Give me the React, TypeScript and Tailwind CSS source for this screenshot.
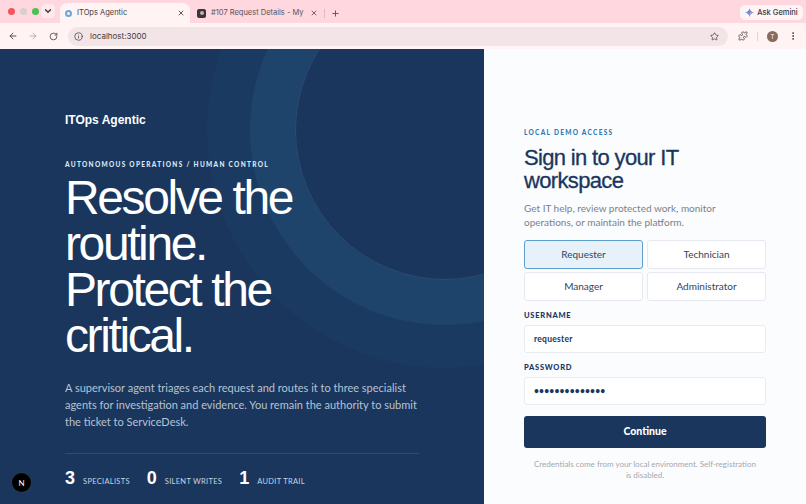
import React from "react";
import { ArrowLeft, ArrowRight, RotateCw, Info, Star, Puzzle, MoreVertical, ChevronDown, X, Plus } from "lucide-react";

const body = "font-['Lato','Noto_Sans',sans-serif]";

function Chrome() {
  return (
    <div className="h-[49px] shrink-0 bg-[#ffd7de] flex flex-col font-['Inter',sans-serif]">
      <div className="h-[23px] flex items-end relative">
        <div className="flex items-center gap-[5px] pl-[8px] w-[60px] h-full">
          <span className="w-[7px] h-[7px] rounded-full bg-[#f0565c]" />
          <span className="w-[7px] h-[7px] rounded-full bg-[#d9cfd2]" />
          <span className="w-[7px] h-[7px] rounded-full bg-[#4bbf55]" />
        </div>
        <div className="absolute left-[41px] top-[4px] w-[14px] h-[14px] rounded-[4px] bg-[#ffe9ec] flex items-center justify-center">
          <ChevronDown size={10} strokeWidth={3} className="text-[#3a3035]" />
        </div>
        <div className="h-[20px] w-[130px] ml-0 bg-[#fff3f4] rounded-t-[7px] flex items-center pl-[5px] pr-[5px] gap-[5px] text-[7.5px] text-[#3f3a3c]">
          <span className="w-[7px] h-[7px] rounded-full border-[2px] border-[#6aa7d8]" />
          <span className="flex-1">ITOps Agentic</span>
          <X size={8} strokeWidth={2.5} />
        </div>
        <div className="h-[20px] w-[134px] flex items-center pl-[7px] pr-[6px] gap-[5px] text-[7.5px] text-[#5b5356]">
          <span className="w-[9px] h-[9px] rounded-[2px] bg-[#39363a] flex items-center justify-center"><span className="w-[4px] h-[4px] rounded-full bg-[#b9b5b8]" /></span>
          <span className="flex-1 whitespace-nowrap overflow-hidden">#107 Request Details - My IT</span>
          <X size={8} strokeWidth={2.5} />
        </div>
        <div className="h-[20px] flex items-center gap-[6px] text-[#5b5356]">
          <span className="w-px h-[9px] bg-[#e9b6c0]" />
          <Plus size={9} strokeWidth={2.5} />
        </div>
        <div className="ml-auto mr-[3px] mb-[3px] h-[15px] w-[63px] bg-[#fff3f4] rounded-[5px] flex items-center justify-center gap-[3px] text-[7.5px] font-medium text-[#3b3639]">
          <svg width="9" height="9" viewBox="0 0 12 12">
            <path d="M6 0C6.5 3.5 8.5 5.5 12 6C8.5 6.5 6.5 8.5 6 12C5.5 8.5 3.5 6.5 0 6C3.5 5.5 5.5 3.5 6 0Z" fill="#5a8fe6" />
            <path d="M6 6L12 6C8.5 6.5 6.5 8.5 6 12Z" fill="#e98bb0" />
          </svg>
          Ask Gemini
        </div>
      </div>
      <div className="h-[26px] bg-[#fff3f4] flex items-center pl-[8px] pr-[8px] text-[#4a4346]">
        <ArrowLeft size={10} strokeWidth={2.2} />
        <ArrowRight size={10} strokeWidth={2.2} className="ml-[10px] text-[#b5acaf]" />
        <RotateCw size={9} strokeWidth={2.2} className="ml-[11px]" />
        <div className="ml-[10px] flex-1 h-[19px] rounded-full bg-[#f3e4e8] flex items-center pl-[6px] pr-[9px] text-[8px] mr-[10px]">
          <Info size={9} strokeWidth={2} />
          <span className="ml-[7px] text-[#403a3d]">localhost:3000</span>
          <Star size={9} strokeWidth={2} className="ml-auto" />
        </div>
        <Puzzle size={10} strokeWidth={2} />
        <span className="w-px h-[9px] bg-[#e3d3d7] ml-[9px]" />
        <span className="ml-[9px] w-[11px] h-[11px] rounded-full bg-[#8a6a5c] text-white text-[6px] flex items-center justify-center">T</span>
        <MoreVertical size={10} strokeWidth={2.4} className="ml-[10px]" />
      </div>
      <div className="h-0" />
    </div>
  );
}

function Stat({ n, label }: { n: string; label: string }) {
  return (
    <div className="flex items-baseline gap-[8px]">
      <span className="text-[18px] font-bold text-white font-['Liberation_Sans',sans-serif] leading-none">{n}</span>
      <span className="text-[7.5px] tracking-[0.04em] text-[#c8d4e2] uppercase">{label}</span>
    </div>
  );
}

function Role({ label, active }: { label: string; active?: boolean }) {
  return (
    <button
      className={
        active
          ? "h-[29px] rounded-[3px] border border-[#5f9fcd] bg-[#e7f1f9] text-[10px] text-[#31445f]"
          : "h-[29px] rounded-[3px] border border-[#e6e9ef] bg-white text-[10px] text-[#31445f]"
      }
    >
      {label}
    </button>
  );
}

export default function App() {
  return (
    <div className={`w-[806px] h-[504px] overflow-hidden flex flex-col ${body}`}>
      <Chrome />
      <div className="flex-1 flex min-h-0">
        <div className="w-[484px] shrink-0 bg-[#1a365d] relative overflow-hidden pl-[65px] pt-[64px]">
          <div className="absolute left-[295px] top-[-69px] w-[300px] h-[300px] rounded-full border border-[#2a4c76] shadow-[0_0_0_45px_rgba(40,90,130,0.32),0_0_0_88px_rgba(40,90,130,0.12)]" />
          <div className="relative">
            <div className="text-[12px] font-bold text-white font-['Liberation_Sans',sans-serif] leading-[15px]">ITOps Agentic</div>
            <div className="mt-[32px] text-[6.5px] font-black tracking-[0.2em] text-[#dbe6f2] leading-[10px] uppercase">Autonomous operations / human control</div>
            <h1 className="mt-[5px] text-[48px] leading-[46px] tracking-[-0.05em] font-normal text-white font-['Liberation_Sans',sans-serif]">
              Resolve the<br />routine.<br />Protect the<br />critical.
            </h1>
            <p className="mt-[20px] w-[354px] text-[11px] leading-[17px] text-[#b6c3d3]">
              A supervisor agent triages each request and routes it to three specialist agents for investigation and evidence. You remain the authority to submit the ticket to ServiceDesk.
            </p>
            <div className="mt-[23px] w-[354px] h-px bg-[#2d4d76]" />
            <div className="mt-[15px] flex gap-[17px]">
              <Stat n="3" label="Specialists" />
              <Stat n="0" label="Silent writes" />
              <Stat n="1" label="Audit trail" />
            </div>
          </div>
          <div className="absolute left-[12px] bottom-[12px] w-[19px] h-[19px] rounded-full bg-black text-white text-[8px] flex items-center justify-center shadow-[0_0_0_1px_#2a3a50]">N</div>
        </div>
        <div className="flex-1 bg-[#fbfcfe] pl-[40px] pr-[40px] pt-[80px]">
          <div className="text-[6.5px] font-black tracking-[0.2em] text-[#2b7bb9] leading-[8px] uppercase">Local demo access</div>
          <h2 className="mt-[9px] text-[22px] leading-[23px] tracking-[-0.03em] text-[#1a365d] font-normal font-['Liberation_Sans',sans-serif] [-webkit-text-stroke:0.3px_#1a365d]">Sign in to your IT workspace</h2>
          <p className="mt-[9px] text-[10px] leading-[14px] text-[#7b8189]">Get IT help, review protected work, monitor operations, or maintain the platform.</p>
          <div className="mt-[11px] grid grid-cols-2 gap-x-[4px] gap-y-[3px]">
            <Role label="Requester" active />
            <Role label="Technician" />
            <Role label="Manager" />
            <Role label="Administrator" />
          </div>
          <div className="mt-[10px] text-[7.5px] font-black tracking-[0.1em] text-[#1a365d] leading-[9px] uppercase">Username</div>
          <div className="mt-[5px] h-[28px] bg-white border border-[#e9ecf1] rounded-[3px] flex items-center pl-[9px] text-[8.5px] font-bold tracking-[0.03em] text-[#1a365d]">requester</div>
          <div className="mt-[10px] text-[7.5px] font-black tracking-[0.1em] text-[#1a365d] leading-[9px] uppercase">Password</div>
          <div className="mt-[5px] h-[28px] bg-white border border-[#e9ecf1] rounded-[3px] flex items-center pl-[9px] text-[8.5px] font-bold tracking-[0.02em] text-[#1a365d]">••••••••••••••</div>
          <button className="mt-[11px] w-full h-[32px] rounded-[3px] bg-[#1a365d] text-white text-[10.5px] font-black">Continue</button>
          <p className="mt-[11px] text-center text-[8px] leading-[11px] text-[#a3a8af] px-[10px]">Credentials come from your local environment. Self-registration is disabled.</p>
        </div>
      </div>
    </div>
  );
}
